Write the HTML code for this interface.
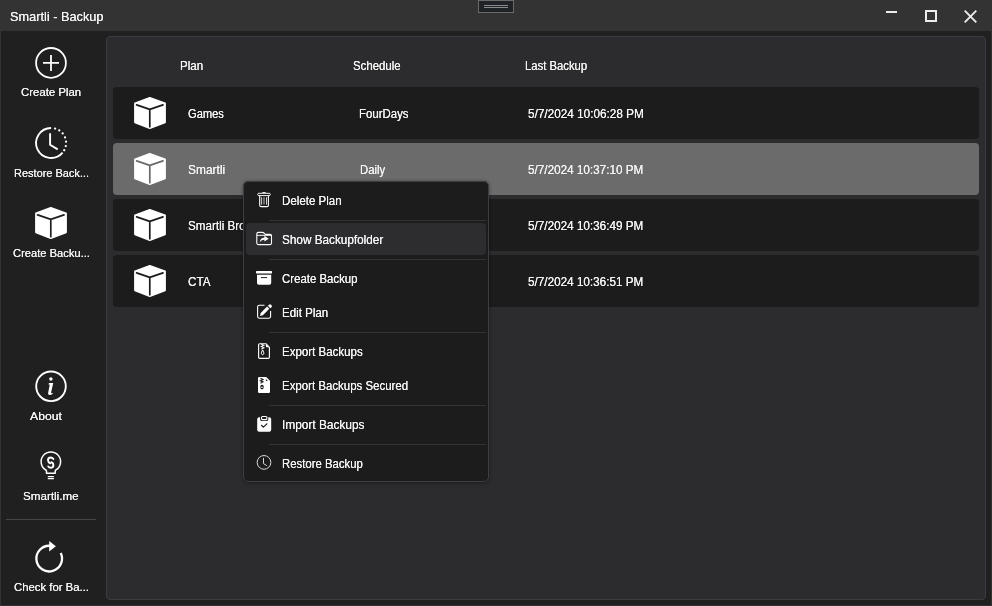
<!DOCTYPE html>
<html><head><meta charset="utf-8">
<style>
html,body{margin:0;padding:0;}
body{width:992px;height:606px;position:relative;overflow:hidden;background:#202020;font-family:"Liberation Sans",sans-serif;color:#f3f3f3;}
.a{position:absolute;}
.t{position:absolute;white-space:nowrap;filter:grayscale(1);text-shadow:0.1px 0 0 currentColor;line-height:14px;transform-origin:0 0;}
svg{position:absolute;overflow:visible;}
</style></head>
<body>
<div class="a" style="left:0;top:0;width:990px;height:605px;border:1px solid #333;border-top:none;"></div>
<div class="a" style="left:0;top:0;width:992px;height:31px;background:#333333;"></div>
<div class="a" style="left:478px;top:0px;width:36px;height:13px;border:1px solid #6b6b6b;background:#1f2328;box-sizing:border-box;"></div>
<div class="a" style="left:484px;top:5px;width:24px;height:1px;background:#8a8a8a;"></div>
<div class="a" style="left:484px;top:7px;width:24px;height:1px;background:#8a8a8a;"></div>
<div class="a" style="left:886px;top:11px;width:11px;height:2px;background:#ececec;"></div>
<div class="a" style="left:925px;top:10px;width:12px;height:12px;border:2px solid #ececec;box-sizing:border-box;"></div>
<svg style="left:964px;top:10px" width="13" height="13" viewBox="0 0 13 13"><path d="M0.7 0.7L12.3 12.3M12.3 0.7L0.7 12.3" stroke="#ececec" stroke-width="1.9"/></svg>
<div class="a" style="left:106px;top:36px;width:878px;height:562px;border:1px solid #3c3b43;border-radius:4px;background:#2c2c2e;"></div>
<div class="a" style="left:113px;top:87px;width:866px;height:52px;border-radius:4px;background:#1c1c1c;"></div>
<div class="a" style="left:113px;top:143px;width:866px;height:52px;border-radius:4px;background:#6b6b6b;"></div>
<div class="a" style="left:113px;top:199px;width:866px;height:52px;border-radius:4px;background:#1c1c1c;"></div>
<div class="a" style="left:113px;top:255px;width:866px;height:52px;border-radius:4px;background:#1c1c1c;"></div>
<svg style="left:134px;top:97px" width="32" height="32" viewBox="0 0 32 32"><path d="M15.8 0.9L31 6.4V25.3L15.8 31.1L1 25.3V6.4Z" fill="#fff" stroke="#fff" stroke-width="1.8" stroke-linejoin="round"/><path d="M2.6 7.9L15.8 12.4L29 7.9M15.8 12.4V29.7" fill="none" stroke="#1c1c1c" stroke-width="1.7" stroke-linecap="round" stroke-linejoin="round"/></svg>
<svg style="left:134px;top:153px" width="32" height="32" viewBox="0 0 32 32"><path d="M15.8 0.9L31 6.4V25.3L15.8 31.1L1 25.3V6.4Z" fill="#fff" stroke="#fff" stroke-width="1.8" stroke-linejoin="round"/><path d="M2.6 7.9L15.8 12.4L29 7.9M15.8 12.4V29.7" fill="none" stroke="#6b6b6b" stroke-width="1.7" stroke-linecap="round" stroke-linejoin="round"/></svg>
<svg style="left:134px;top:209px" width="32" height="32" viewBox="0 0 32 32"><path d="M15.8 0.9L31 6.4V25.3L15.8 31.1L1 25.3V6.4Z" fill="#fff" stroke="#fff" stroke-width="1.8" stroke-linejoin="round"/><path d="M2.6 7.9L15.8 12.4L29 7.9M15.8 12.4V29.7" fill="none" stroke="#1c1c1c" stroke-width="1.7" stroke-linecap="round" stroke-linejoin="round"/></svg>
<svg style="left:134px;top:265px" width="32" height="32" viewBox="0 0 32 32"><path d="M15.8 0.9L31 6.4V25.3L15.8 31.1L1 25.3V6.4Z" fill="#fff" stroke="#fff" stroke-width="1.8" stroke-linejoin="round"/><path d="M2.6 7.9L15.8 12.4L29 7.9M15.8 12.4V29.7" fill="none" stroke="#1c1c1c" stroke-width="1.7" stroke-linecap="round" stroke-linejoin="round"/></svg>
<svg style="left:0;top:0" width="1" height="1"><circle cx="51" cy="62.9" r="14.9" fill="none" stroke="#fff" stroke-width="1.8"/><path d="M43 62.9H59M51 54.9V70.9" stroke="#fff" stroke-width="1.8"/></svg>
<svg style="left:0;top:0" width="1" height="1"><path d="M51.1 128 A15 15 0 1 0 62.59 152.64" fill="none" stroke="#fff" stroke-width="1.9"/><circle cx="55.11" cy="128.55" r="1.15" fill="#fff"/><circle cx="59.27" cy="130.42" r="1.15" fill="#fff"/><circle cx="62.67" cy="133.46" r="1.15" fill="#fff"/><circle cx="65.01" cy="137.38" r="1.15" fill="#fff"/><circle cx="66.04" cy="141.69" r="1.15" fill="#fff"/><circle cx="65.77" cy="146.12" r="1.15" fill="#fff"/><circle cx="64.22" cy="150.27" r="1.15" fill="#fff"/><path d="M50.1 133.2V144.8L57.7 149.4" fill="none" stroke="#fff" stroke-width="1.9" stroke-linejoin="miter"/></svg>
<svg style="left:35px;top:207px" width="32" height="32" viewBox="0 0 32 32"><path d="M15.8 0.9L31 6.4V25.3L15.8 31.1L1 25.3V6.4Z" fill="#fff" stroke="#fff" stroke-width="1.8" stroke-linejoin="round"/><path d="M2.6 7.9L15.8 12.4L29 7.9M15.8 12.4V29.7" fill="none" stroke="#202020" stroke-width="1.7" stroke-linecap="round" stroke-linejoin="round"/></svg>
<svg style="left:0;top:0" width="1" height="1"><circle cx="51" cy="386.3" r="14.8" fill="none" stroke="#fff" stroke-width="1.9"/><circle cx="50.9" cy="378.9" r="1.75" fill="#fff"/><path d="M48.9 383.1H53.2L51.1 392.4Q50.9 393.5 52 393.1L52.7 392.8L52.5 394.1Q51.2 395 49.6 395Q47.7 395 48.1 393L49.8 384.6L48.6 384.8Z" fill="#fff"/></svg>
<svg style="left:0;top:0" width="1" height="1"><path d="M46.5 473.35V471.4Q46.5 470.6 46 470.1A9.75 9.75 0 1 1 55.7 470.1Q55.2 470.6 55.2 471.4V473.35Z" fill="none" stroke="#fff" stroke-width="1.5" stroke-linejoin="round"/><path d="M47.8 476.6H53.9M47.8 478.6H53.9" stroke="#fff" stroke-width="1.15"/><path d="M53.4 459Q52.4 457.5 50.6 457.5Q48 457.6 48 460.2Q48.1 462.3 50.3 463.3" fill="none" stroke="#fff" stroke-width="1.9" stroke-linecap="round"/><path d="M51.4 462.2Q53.4 463.2 53.4 465.1Q53.4 467.7 51.1 467.7Q49.2 467.8 48.3 466.4" fill="none" stroke="#fff" stroke-width="1.9" stroke-linecap="round"/></svg>
<svg style="left:0;top:0" width="1" height="1"><path d="M60.75 552.97 A12.85 12.85 0 1 1 50.03 545.77" fill="none" stroke="#fff" stroke-width="2.3"/><path d="M49.2 541L55.9 546.2L49.2 551.4Z" fill="#fff"/></svg>
<div class="a" style="left:6px;top:519px;width:90px;height:1px;background:#45454b;"></div>
<div class="t" style="left:10.30px;top:10px;font-size:13.2px;transform:scaleX(0.9657)">Smartli - Backup</div>
<div class="t" style="left:21.30px;top:85px;font-size:11.8px;transform:scaleX(0.9638)">Create Plan</div>
<div class="t" style="left:13.70px;top:166px;font-size:11.8px;transform:scaleX(0.9295)">Restore Back...</div>
<div class="t" style="left:12.50px;top:246px;font-size:11.8px;transform:scaleX(0.9454)">Create Backu...</div>
<div class="t" style="left:30.20px;top:409px;font-size:11.8px;transform:scaleX(1.0332)">About</div>
<div class="t" style="left:22.80px;top:489px;font-size:11.8px;transform:scaleX(0.9858)">Smartli.me</div>
<div class="t" style="left:13.80px;top:580px;font-size:11.8px;transform:scaleX(0.9596)">Check for Ba...</div>
<div class="t" style="left:180.26px;top:59px;font-size:12.3px;transform:scaleX(0.9380)">Plan</div>
<div class="t" style="left:353.10px;top:59px;font-size:12.3px;transform:scaleX(0.9273)">Schedule</div>
<div class="t" style="left:524.68px;top:59px;font-size:12.3px;transform:scaleX(0.9172)">Last Backup</div>
<div class="t" style="left:188.20px;top:107px;font-size:12.3px;transform:scaleX(0.9041)">Games</div>
<div class="t" style="left:359.37px;top:107px;font-size:12.3px;transform:scaleX(0.9281)">FourDays</div>
<div class="t" style="left:527.70px;top:107px;font-size:12.3px;transform:scaleX(0.9564)">5/7/2024 10:06:28 PM</div>
<div class="t" style="left:188.10px;top:163px;font-size:12.3px;transform:scaleX(0.9700)">Smartli</div>
<div class="t" style="left:359.98px;top:163px;font-size:12.3px;transform:scaleX(0.9197)">Daily</div>
<div class="t" style="left:527.80px;top:163px;font-size:12.3px;transform:scaleX(0.9522)">5/7/2024 10:37:10 PM</div>
<div class="t" style="left:188.10px;top:219px;font-size:12.3px;transform:scaleX(0.9470)">Smartli Browser</div>
<div class="t" style="left:359.98px;top:219px;font-size:12.3px;transform:scaleX(0.9197)">Daily</div>
<div class="t" style="left:527.80px;top:219px;font-size:12.3px;transform:scaleX(0.9522)">5/7/2024 10:36:49 PM</div>
<div class="t" style="left:188.10px;top:275px;font-size:12.3px;transform:scaleX(0.9470)">CTA</div>
<div class="t" style="left:359.98px;top:275px;font-size:12.3px;transform:scaleX(0.9197)">Daily</div>
<div class="t" style="left:527.80px;top:275px;font-size:12.3px;transform:scaleX(0.9522)">5/7/2024 10:36:51 PM</div>

<div class="a" style="left:243px;top:181px;width:244px;height:299px;background:#1c1c1c;border:1px solid #3d3e43;border-radius:5px;box-shadow:0 0 3px rgba(0,0,0,0.3),0 2px 4px rgba(0,0,0,0.15);"></div>
<div class="a" style="left:246px;top:223px;width:240px;height:32px;background:#2d2d30;border-radius:4px;"></div>
<div class="a" style="left:269px;top:220px;width:217px;height:1px;background:#333335;"></div>
<div class="a" style="left:269px;top:259px;width:217px;height:1px;background:#333335;"></div>
<div class="a" style="left:269px;top:332px;width:217px;height:1px;background:#333335;"></div>
<div class="a" style="left:269px;top:405px;width:217px;height:1px;background:#333335;"></div>
<div class="a" style="left:269px;top:444px;width:217px;height:1px;background:#333335;"></div>
<div class="t" style="left:281.76px;top:194px;font-size:12.3px;transform:scaleX(0.9373)">Delete Plan</div>
<div class="t" style="left:282.30px;top:233px;font-size:12.3px;transform:scaleX(0.9551)">Show Backupfolder</div>
<div class="t" style="left:282.10px;top:272px;font-size:12.3px;transform:scaleX(0.9276)">Create Backup</div>
<div class="t" style="left:281.76px;top:306px;font-size:12.3px;transform:scaleX(0.9384)">Edit Plan</div>
<div class="t" style="left:281.66px;top:345px;font-size:12.3px;transform:scaleX(0.9368)">Export Backups</div>
<div class="t" style="left:281.77px;top:379px;font-size:12.3px;transform:scaleX(0.9316)">Export Backups Secured</div>
<div class="t" style="left:281.94px;top:418px;font-size:12.3px;transform:scaleX(0.9646)">Import Backups</div>
<div class="t" style="left:281.98px;top:457px;font-size:12.3px;transform:scaleX(0.9233)">Restore Backup</div>
<svg style="left:0;top:0" width="1" height="1"><rect x="257.7" y="193.3" width="12.6" height="2.3" rx="1.15" fill="none" stroke="#fff" stroke-width="0.95"/><path d="M261.8 193.1Q264 190.9 266.2 193.1Z" fill="#fff"/><path d="M259.7 195.8V205.2Q259.7 206.6 261.1 206.6H267Q268.4 206.6 268.4 205.2V195.8" fill="none" stroke="#fff" stroke-width="1.1"/><path d="M261.6 197.3V204.6M266.5 197.3V204.6" stroke="#fff" stroke-width="0.8"/><path d="M264 197.3V204.6" stroke="#999" stroke-width="1.3"/><path d="M256.8 243V234Q256.8 232.4 258.4 232.4H262.4Q263.4 232.4 264 233L265.3 234.4H270Q271.5 234.4 271.5 236V243Q271.5 244.6 270 244.6H258.4Q256.8 244.6 256.8 243Z" fill="none" stroke="#fff" stroke-width="1.1" stroke-linejoin="round"/><path d="M257 235.3H271.3" stroke="#fff" stroke-width="1"/><path d="M259.8 242.2Q260.4 237.9 264.4 237.6V235.7L268.7 238.7L264.4 241.6V239.8Q261.6 239.8 259.8 242.2Z" fill="#fff"/><rect x="256" y="271" width="16" height="2.6" rx="0.6" fill="#fff"/><path d="M257 274.8H271.2V283Q271.2 284.8 269.4 284.8H258.8Q257 284.8 257 283Z" fill="#fff"/><path d="M261.3 277.6H266.7" stroke="#1c1c1c" stroke-width="1" stroke-linecap="round"/><path d="M264.5 305.3H259.2Q257.6 305.3 257.6 306.9V316.6Q257.6 318.2 259.2 318.2H269Q270.6 318.2 270.6 316.6V311" fill="none" stroke="#fff" stroke-width="1.1"/><path d="M260 315.9L260.7 313L267.1 306.6L269.3 308.8L262.9 315.2Z" fill="#fff"/><path d="M267.9 305.8L269 304.7Q270 303.8 271 304.7L271.5 305.2Q272.4 306.2 271.5 307.2L270.4 308.3Z" fill="#fff"/><path d="M265.9 343.7H259.7Q258.6 343.7 258.6 344.8V357.3Q258.6 358.4 259.7 358.4H268.3Q269.4 358.4 269.4 357.3V347.3Z" fill="none" stroke="#fff" stroke-width="1.15" stroke-linejoin="round"/><path d="M265.9 343.7V346.3Q265.9 347.3 266.9 347.3H269.4Z" fill="#fff"/><path d="M261.3 344.2L263.8 345.3L261.3 346.5L263.8 347.7L261.4 348.9" fill="none" stroke="#fff" stroke-width="1.1"/><path d="M262.6 349.8Q261.1 352.5 261.4 353.8Q261.8 354.7 262.6 354.7Q263.4 354.7 263.8 353.8Q264.1 352.5 262.6 349.8Z" fill="none" stroke="#fff" stroke-width="1"/><path d="M266.2 377H259.2Q258 377 258 378.2V391.8Q258 393 259.2 393H268.8Q270 393 270 391.8V380.8Z" fill="#fff"/><path d="M265.9 379.1L267.8 381H266.5Q265.9 381 265.9 380.4Z" fill="#1c1c1c"/><path d="M260.4 378.3L263 379.5L260.4 380.7L263 381.9L260.5 383.2" fill="none" stroke="#1c1c1c" stroke-width="1.1"/><ellipse cx="262" cy="387.1" rx="1.75" ry="2.4" fill="#1c1c1c"/><rect x="261.3" y="386.7" width="1.4" height="1.3" fill="#fff"/><path d="M259.2 417.2H260.1V419.2Q260.1 421.1 262 421.1H266.4Q268.3 421.1 268.3 419.2V417.2H269.2Q271.2 417.2 271.2 419.2V429.8Q271.2 431.8 269.2 431.8H259.2Q257.2 431.8 257.2 429.8V419.2Q257.2 417.2 259.2 417.2Z" fill="#fff"/><rect x="261.5" y="416.5" width="5.4" height="3.1" rx="1" fill="#1c1c1c" stroke="#fff" stroke-width="1.1"/><path d="M261.6 425.5L263.4 427.1L266.9 423.9" fill="none" stroke="#1c1c1c" stroke-width="1.25" stroke-linecap="round" stroke-linejoin="round"/><circle cx="264" cy="462.4" r="6.85" fill="none" stroke="#e0e0e0" stroke-width="0.95"/><path d="M263.5 458.3V463.6L266.5 465.5" fill="none" stroke="#e0e0e0" stroke-width="0.95" stroke-linecap="round" stroke-linejoin="round"/></svg>
</body></html>
